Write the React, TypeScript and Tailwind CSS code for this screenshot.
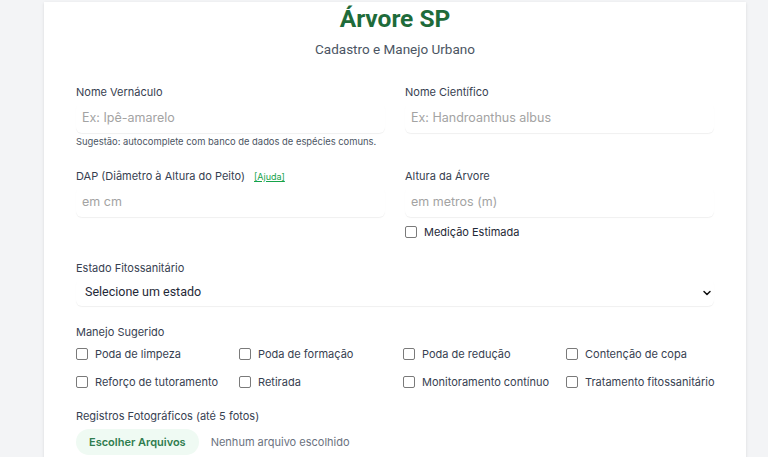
import { ChevronDown } from "lucide-react";

const manejos = [
  "Poda de limpeza",
  "Poda de formação",
  "Poda de redução",
  "Contenção de copa",
  "Reforço de tutoramento",
  "Retirada",
  "Monitoramento contínuo",
  "Tratamento fitossanitário",
];

const Box = () => (
  <span className="inline-block w-[12px] h-[12px] rounded-[2px] border border-[#7a7a7a] bg-white shrink-0" />
);

const Field = ({ placeholder }: { placeholder: string }) => (
  <div className="mt-[3px] h-[30px] flex items-center px-[6px] rounded-md bg-white shadow-[0_1px_1px_#f0f0f0]">
    <span className="text-[12.5px] text-[#a3a3a3]">{placeholder}</span>
  </div>
);

const Label = ({ children }: { children: React.ReactNode }) => (
  <div className="h-[16px] leading-[16px] text-[11px] text-[#374151]">{children}</div>
);

export default function App() {
  return (
    <div className="min-h-screen bg-[#f3f4f6] pt-[2px] font-['Inter',sans-serif]">
      <div className="ml-[44px] w-[702px] bg-white shadow-sm px-[32px] pb-[20px]">
        <h1 className="h-[31px] leading-[33px] text-center text-[24.5px] font-bold text-[#1e6b3a] font-['Roboto',sans-serif]">
          Árvore SP
        </h1>
        <p className="mt-[7px] leading-[18px] text-center text-[13.5px] text-[#4b5563] font-['Roboto',sans-serif]">
          Cadastro e Manejo Urbano
        </p>

        <div className="mt-[26px] grid grid-cols-2 gap-x-[20px] gap-y-[19px]">
          <div>
            <Label>Nome Vernáculo</Label>
            <Field placeholder="Ex: Ipê-amarelo" />
            <div className="mt-[2px] leading-[14px] text-[9.4px] text-[#4b5563]">
              Sugestão: autocomplete com banco de dados de espécies comuns.
            </div>
          </div>
          <div>
            <Label>Nome Científico</Label>
            <Field placeholder="Ex: Handroanthus albus" />
          </div>
          <div>
            <Label>
              DAP (Diâmetro à Altura do Peito)
              <a className="ml-[9px] text-[9px] text-[#16a34a] underline">[Ajuda]</a>
            </Label>
            <Field placeholder="em cm" />
          </div>
          <div>
            <Label>Altura da Árvore</Label>
            <Field placeholder="em metros (m)" />
            <label className="mt-[7px] h-[16px] flex items-center gap-[7px] text-[11px] text-[#1f2937]">
              <Box />
              Medição Estimada
            </label>
          </div>
        </div>

        <div className="mt-[20px]">
          <Label>Estado Fitossanitário</Label>
          <div className="mt-[3px] h-[27px] flex items-center justify-between pl-[9px] pr-[1px] rounded-md bg-white shadow-[0_1px_1px_#f0f0f0]">
            <span className="text-[12.5px] font-normal text-[#1f2937] font-['Roboto',sans-serif]">Selecione um estado</span>
            <ChevronDown size={12} strokeWidth={3} className="text-[#111]" />
          </div>
        </div>

        <div className="mt-[18px]">
          <Label>Manejo Sugerido</Label>
          <div className="mt-[6px] grid grid-cols-[163px_164px_163px_1fr] gap-y-[12px]">
            {manejos.map((m) => (
              <label key={m} className="h-[16px] flex items-center gap-[7px] text-[11px] text-[#374151] whitespace-nowrap">
                <Box />
                {m}
              </label>
            ))}
          </div>
        </div>

        <div className="mt-[18px]">
          <Label>Registros Fotográficos (até 5 fotos)</Label>
          <div className="mt-[5px] flex items-center gap-[12px]">
            <button className="h-[26px] px-[13px] rounded-full bg-[#effaf3] text-[11px] font-semibold text-[#2f7d4f]">
              Escolher Arquivos
            </button>
            <span className="text-[11px] text-[#6b7280]">Nenhum arquivo escolhido</span>
          </div>
        </div>
      </div>
    </div>
  );
}
